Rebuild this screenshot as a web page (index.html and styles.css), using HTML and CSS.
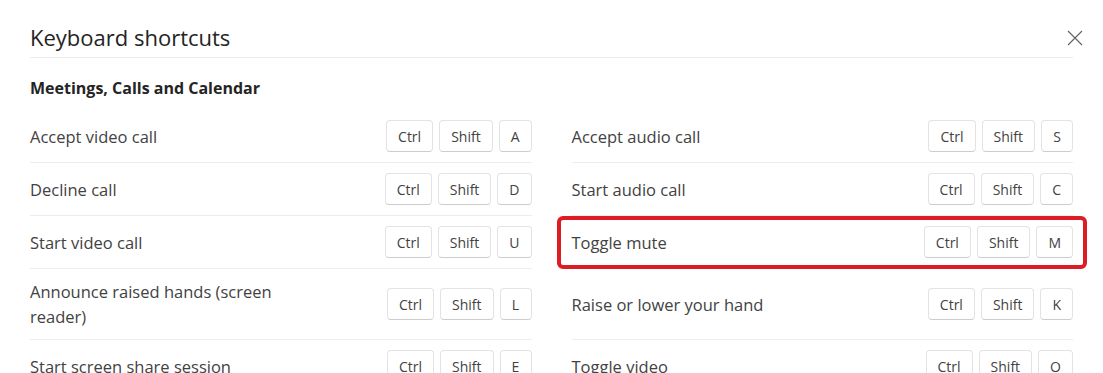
FILE: index.html
```html
<!DOCTYPE html>
<html lang="en">
<head>
<meta charset="utf-8">
<title>Keyboard shortcuts</title>
<link rel="stylesheet" href="styles.css">
</head>
<body>
<div class="dialog">
  <header class="header">
    <h1 class="title">Keyboard shortcuts</h1>
    <button class="close" aria-label="Close">
      <svg width="16" height="16" viewBox="0 0 16 16"><path d="M1 1 L15 15 M15 1 L1 15" stroke="#616161" stroke-width="1.1" fill="none"/></svg>
    </button>
  </header>
  <h2 class="section">Meetings, Calls and Calendar</h2>
  <div class="grid">
    <div class="row"><span class="label">Accept video call</span><span class="keys"><kbd class="key">Ctrl</kbd><kbd class="key">Shift</kbd><kbd class="key">A</kbd></span></div>
    <div class="row"><span class="label">Accept audio call</span><span class="keys"><kbd class="key">Ctrl</kbd><kbd class="key">Shift</kbd><kbd class="key">S</kbd></span></div>
    <div class="row"><span class="label">Decline call</span><span class="keys"><kbd class="key">Ctrl</kbd><kbd class="key">Shift</kbd><kbd class="key">D</kbd></span></div>
    <div class="row"><span class="label">Start audio call</span><span class="keys"><kbd class="key">Ctrl</kbd><kbd class="key">Shift</kbd><kbd class="key">C</kbd></span></div>
    <div class="row"><span class="label">Start video call</span><span class="keys"><kbd class="key">Ctrl</kbd><kbd class="key">Shift</kbd><kbd class="key">U</kbd></span></div>
    <div class="row row-highlight"><span class="label">Toggle mute</span><span class="keys"><kbd class="key">Ctrl</kbd><kbd class="key">Shift</kbd><kbd class="key">M</kbd></span><span class="highlight"></span></div>
    <div class="row"><span class="label">Announce raised hands (screen reader)</span><span class="keys"><kbd class="key">Ctrl</kbd><kbd class="key">Shift</kbd><kbd class="key">L</kbd></span></div>
    <div class="row"><span class="label">Raise or lower your hand</span><span class="keys"><kbd class="key">Ctrl</kbd><kbd class="key">Shift</kbd><kbd class="key">K</kbd></span></div>
    <div class="row"><span class="label">Start screen share session</span><span class="keys"><kbd class="key">Ctrl</kbd><kbd class="key">Shift</kbd><kbd class="key">E</kbd></span></div>
    <div class="row"><span class="label">Toggle video</span><span class="keys"><kbd class="key">Ctrl</kbd><kbd class="key">Shift</kbd><kbd class="key">O</kbd></span></div>
  </div>
</div>
</body>
</html>
```
FILE: styles.css
```css
html, body {
  margin: 0;
  padding: 0;
  background: #ffffff;
}
body {
  font-family: "Open Sans", "Noto Sans", "Liberation Sans", sans-serif;
  color: #242424;
  overflow: hidden;
}
.dialog {
  width: 1043px;
  padding: 0 30px;
}
.header {
  display: flex;
  align-items: center;
  justify-content: space-between;
  padding: 23px 0 5px;
  border-bottom: 1px solid #ececec;
}
.title {
  margin: 0;
  font-size: 22px;
  line-height: 29px;
  font-weight: 400;
  color: #242424;
}
.close {
  display: flex;
  align-items: center;
  justify-content: center;
  width: 16px;
  height: 16px;
  padding: 0;
  margin: 0 -10px 0 0;
  border: none;
  background: transparent;
}
.section {
  margin: 19px 0 11px;
  font-size: 16px;
  line-height: 22px;
  font-weight: 700;
  color: #242424;
}
.grid {
  display: grid;
  grid-template-columns: 1fr 1fr;
  column-gap: 40px;
}
.row {
  position: relative;
  display: flex;
  align-items: center;
  justify-content: space-between;
  padding: 10px 0;
  min-height: 32px;
  border-bottom: 1px solid #ededed;
}
.label {
  max-width: 262px;
  font-size: 16.5px;
  line-height: 25px;
  color: #424242;
}
.keys {
  display: flex;
  gap: 6px;
}
.key {
  box-sizing: border-box;
  display: inline-flex;
  align-items: center;
  justify-content: center;
  height: 32px;
  min-width: 32px;
  padding: 0 11px;
  border: 1px solid #e3e3e3;
  border-bottom-color: #cdcdcd;
  border-radius: 4px;
  background: #ffffff;
  font-family: "Open Sans", "Noto Sans", "Liberation Sans", sans-serif;
  font-size: 14px;
  color: #424242;
}
.row-highlight {
  border-bottom-color: transparent;
}
.highlight {
  position: absolute;
  top: 0;
  bottom: -1px;
  left: -15px;
  right: -14px;
  border: 4px solid #dd1c24;
  border-radius: 6px;
  pointer-events: none;
}
```
